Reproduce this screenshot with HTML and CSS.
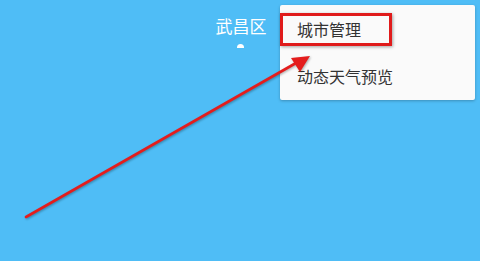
FILE: index.html
```html
<!DOCTYPE html>
<html>
<head>
<meta charset="utf-8">
<link rel="stylesheet" href="styles.css">
</head>
<body>
<div class="screen">
  <header class="top">
    <div class="title">武昌区</div>
    <div class="indicator"></div>
  </header>
  <div class="menu">
    <div class="item first">城市管理<span class="mark"></span></div>
    <div class="item">动态天气预览</div>
  </div>
  <svg class="arrow" width="480" height="261" viewBox="0 0 480 261">
    <line x1="26" y1="217" x2="296" y2="63" stroke="#e41d1d" stroke-width="2.6" stroke-linecap="round"/>
    <polygon points="310,56 291,58 300,72" fill="#e41d1d"/>
  </svg>
</div>
</body>
</html>
```
FILE: styles.css
```css
html, body {
  margin: 0;
  padding: 0;
}
body {
  width: 480px;
  height: 261px;
  background: #4fbdf6;
  font-family: "Noto Sans CJK SC", "Noto Sans", sans-serif;
  overflow: hidden;
}
.screen {
  position: relative;
  width: 480px;
  height: 261px;
}
.top {
  display: flex;
  flex-direction: column;
  align-items: center;
  padding-top: 14px;
}
.title {
  color: #ffffff;
  font-size: 17px;
  line-height: 24px;
  margin-left: 2px;
}
.indicator {
  width: 7px;
  height: 4px;
  background: #ffffff;
  border-radius: 4px 4px 0 0;
  margin-top: 6px;
}
.menu {
  position: absolute;
  left: 280px;
  top: 5px;
  width: 195px;
  height: 95px;
  background: #fafafa;
  box-shadow: 0 1px 3px rgba(0, 0, 0, 0.25);
  border-radius: 2px;
}
.item {
  position: relative;
  height: 48px;
  line-height: 48px;
  padding-left: 17px;
  font-size: 16px;
  color: #333333;
}
.item + .item {
  height: 47px;
  line-height: 47px;
}
.mark {
  position: absolute;
  left: 0;
  top: 8px;
  width: 106px;
  height: 27px;
  border: 3px solid #e01b1b;
  box-shadow: 1px 1px 3px rgba(0, 0, 0, 0.35);
}
.arrow {
  position: absolute;
  left: 0;
  top: 0;
  filter: drop-shadow(1px 1px 1px rgba(0, 0, 0, 0.3));
}
```
